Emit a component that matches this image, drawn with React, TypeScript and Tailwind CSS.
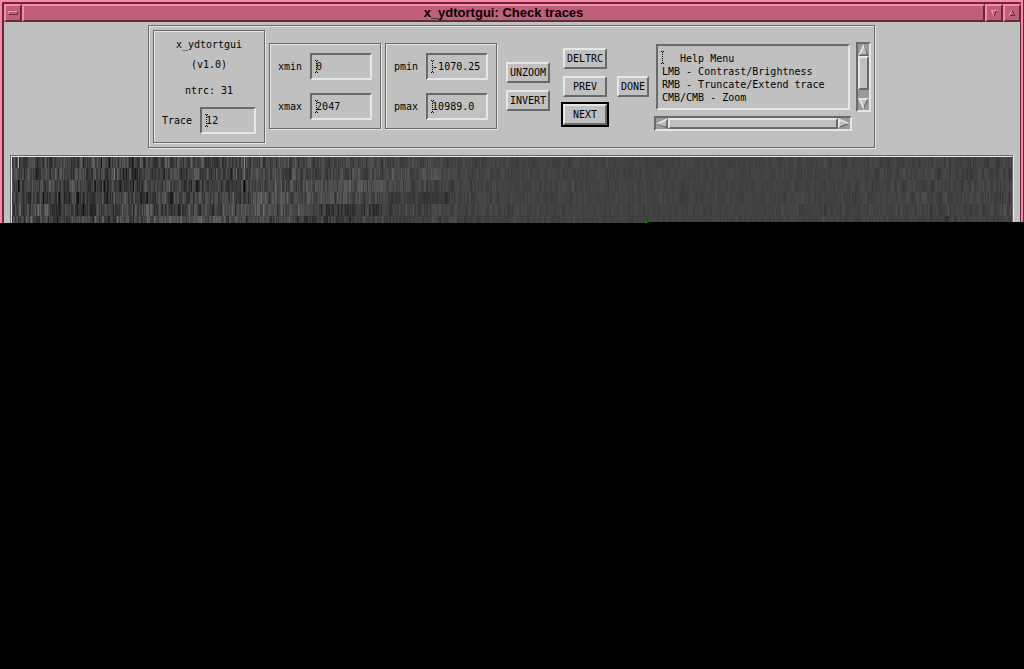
import { useEffect, useRef } from "react";

const ETCHED =
  "border border-[#696969] shadow-[1px_1px_0_#e6e6e6,inset_1px_1px_0_#e6e6e6]";
const SUNKEN =
  "border-2 border-t-[#696969] border-l-[#696969] border-b-[#e6e6e6] border-r-[#e6e6e6]";
const RAISED =
  "border-2 border-t-[#e6e6e6] border-l-[#e6e6e6] border-b-[#696969] border-r-[#696969]";
const PINK_RAISED =
  "border-2 border-t-[#ff87a6] border-l-[#ff87a6] border-b-[#5f2d3a] border-r-[#5f2d3a] bg-[#c06078]";

function InsertMark({ className }: { className: string }) {
  return (
    <svg
      aria-hidden="true"
      width="3"
      height="13"
      viewBox="0 0 3 13"
      shapeRendering="crispEdges"
      className={`pointer-events-none absolute ${className}`}
    >
      <path
        fill="#000"
        d="M0 0h1v1h-1zM2 0h1v1h-1zM1 1h1v1h-1zM1 3h1v1h-1zM1 5h1v1h-1zM1 7h1v1h-1zM1 9h1v1h-1zM1 11h1v1h-1zM0 12h1v1h-1zM2 12h1v1h-1z"
      />
    </svg>
  );
}

function Field({ id, value, width }: { id: string; value: string; width: string }) {
  return (
    <div className="flex items-center justify-end gap-2">
      <label htmlFor={id}>{id}</label>
      <div className={`relative ${width}`}>
        <input
          id={id}
          defaultValue={value}
          className={`block h-[27px] w-full bg-[#c0c0c0] pl-1 outline-none ${SUNKEN}`}
        />
        <InsertMark className="top-[7px] left-[5px]" />
      </div>
    </div>
  );
}

function PushButton({ label, width = "w-11" }: { label: string; width?: string }) {
  return (
    <button className={`flex h-[21px] items-center justify-center ${width} ${RAISED}`}>
      {label}
    </button>
  );
}

type Direction = "up" | "down" | "left" | "right";

const ARROWS: Record<Direction, { shape: string; dark: string; light: string }> = {
  up: {
    shape: "M5.5 0L11 12H0z",
    dark: "M5.5 0L11 12H0L1.5 10.2H8.6z",
    light: "M5.5 0L0 12L2 10.5L6 3z",
  },
  down: {
    shape: "M0 0H11L5.5 12z",
    dark: "M11 0L5.5 12V8.5L8.8 1.8z",
    light: "M0 0H11L9 1.8H2.6L5.7 8.5V12z",
  },
  left: {
    shape: "M0 5.5L12 0V11z",
    dark: "M0 5.5L12 11V0L10.2 2V8.6z",
    light: "M0 5.5L12 0L10.5 2.2L3.5 5.5z",
  },
  right: {
    shape: "M0 0L12 5.5L0 11z",
    dark: "M12 5.5L0 11L1.8 8.6L8.5 5.5z",
    light: "M0 11V0L12 5.5H8.5L1.8 2.6V8.6z",
  },
};

function ArrowButton({ direction }: { direction: Direction }) {
  const vertical = direction === "up" || direction === "down";
  const w = vertical ? 11 : 12;
  const h = vertical ? 12 : 11;
  const { shape, dark, light } = ARROWS[direction];
  return (
    <button aria-label={`Scroll ${direction}`} className="shrink-0">
      <svg width={w} height={h} viewBox={`0 0 ${w} ${h}`} className="block">
        <path d={shape} fill="#c0c0c0" />
        <path d={dark} fill="#696969" />
        <path d={light} fill="#e6e6e6" />
      </svg>
    </button>
  );
}

// Bright and dark events per row: [row, centre, half width, strength]
const EVENTS = [
  [1, 75, 18, 12],
  [1, 410, 50, 9],
  [1, 130, 30, -7],
  [2, 335, 45, 16],
  [2, 170, 35, -6],
  [3, 290, 60, 14],
  [3, 410, 30, -9],
  [3, 70, 20, -12],
  [4, 245, 50, 15],
  [4, 345, 35, -11],
  [4, 80, 20, -8],
  [5, 195, 45, 16],
  [5, 315, 40, -9],
];

// Single samples that stand out: [row, x, grey level]
const SPIKES = [
  [0, 6, 165],
  [0, 232, 140],
  [2, 6, 4],
  [2, 231, 30],
  [2, 232, 4],
  [0, 89, 18],
  [0, 120, 22],
  [1, 102, 120],
  [1, 224, 105],
  [2, 121, 15],
  [3, 31, 10],
  [3, 47, 12],
];

function Traces() {
  const ref = useRef<HTMLCanvasElement>(null);
  useEffect(() => {
    const ctx = ref.current?.getContext("2d");
    if (!ctx) return;
    let seed = 7321;
    const random = () => {
      seed = (seed * 1664525 + 1013904223) % 4294967296;
      return seed / 4294967296;
    };
    for (let row = 0; row < 6; row++) {
      const top = row === 0 ? 0 : row * 12 - 1;
      const height = row === 0 ? 11 : 12;
      let spread = 0;
      for (let x = 0; x < 1000; x++) {
        const early = 13 * Math.exp(-Math.pow(x / 400, 3));
        const late = x > 720 ? (x - 720) / 90 : 0;
        const amplitude = 2.5 + early + late;
        spread = spread * 0.3 + (random() + random() + random() - 1.5);
        let level = 65 + spread * 2 * amplitude;
        for (const [r, centre, half, strength] of EVENTS) {
          if (r === row) level += strength * Math.exp(-Math.pow((x - centre) / half, 2));
        }
        const spike = SPIKES.find(([r, at]) => r === row && at === x);
        const grey = spike ? spike[2] : Math.max(16, Math.min(120, Math.round(level)));
        ctx.fillStyle = `rgb(${grey},${grey},${grey})`;
        ctx.fillRect(x, top, 1, height);
      }
    }
    ctx.fillStyle = "#00ff00";
    ctx.fillRect(634, 65, 1, 1);
  }, []);
  return (
    <canvas
      ref={ref}
      width={1000}
      height={66}
      className="block h-[66px] w-full [image-rendering:pixelated]"
    />
  );
}

function TitleBar() {
  return (
    <header className="flex h-5 border-t-2 border-l-2 border-[#5f2d3a]">
      <button
        aria-label="Window menu"
        className={`flex w-[18px] items-center justify-center ${PINK_RAISED}`}
      >
        <span className="block h-1 w-2.5 border border-t-[#ff87a6] border-l-[#ff87a6] border-r-[#5f2d3a] border-b-[#5f2d3a]" />
      </button>
      <h1
        className={`flex flex-1 items-center justify-center pb-0.5 font-['Liberation_Sans',sans-serif] text-[13px] leading-none font-bold ${PINK_RAISED}`}
      >
        x_ydtortgui: Check traces
      </h1>
      <button
        aria-label="Minimize"
        className={`flex w-[18px] items-center justify-center ${PINK_RAISED}`}
      >
        <svg
          width="6"
          height="6"
          viewBox="0 0 6 6"
          shapeRendering="crispEdges"
          className="shrink-0"
        >
          <path d="M0 0h6v1H0zM0 1h2v1H0zM1 2h1v2H1zM2 4h1v2H2z" fill="#ff87a6" />
          <path d="M5 1h1v1H5zM4 2h1v2H4zM3 4h1v2H3z" fill="#5f2d3a" />
        </svg>
      </button>
      <button
        aria-label="Maximize"
        className={`flex w-[18px] items-center justify-center ${PINK_RAISED}`}
      >
        <svg
          width="6"
          height="6"
          viewBox="0 0 6 6"
          shapeRendering="crispEdges"
          className="shrink-0"
        >
          <path d="M2 0h1v2H2zM1 2h1v2H1zM0 4h1v2H0z" fill="#ff87a6" />
          <path d="M3 0h1v2H3zM4 2h1v2H4zM5 4h1v1H5zM1 5h5v1H1z" fill="#5f2d3a" />
        </svg>
      </button>
    </header>
  );
}

const HELP = `   Help Menu
LMB - Contrast/Brightness
RMB - Truncate/Extend trace
CMB/CMB - Zoom`;

function HelpBox() {
  return (
    <div className="flex items-start gap-1">
      <div className="flex w-[198px] flex-col gap-1">
        <div className="relative m-0.5">
          <textarea
            aria-label="Help"
            readOnly
            value={HELP}
            className={`block h-[66px] w-full resize-none overflow-hidden pt-1.5 pl-1 leading-[13px] whitespace-pre outline-none ${SUNKEN}`}
          />
          <InsertMark className="top-[7px] left-[5px]" />
        </div>
        <div className={`flex h-[15px] bg-[#9a9a9a] ${SUNKEN}`}>
          <ArrowButton direction="left" />
          <div className={`flex-1 bg-[#c0c0c0] ${RAISED}`} />
          <ArrowButton direction="right" />
        </div>
      </div>
      <div className={`flex h-[70px] w-[15px] flex-col bg-[#9a9a9a] ${SUNKEN}`}>
        <ArrowButton direction="up" />
        <div className={`h-[34px] bg-[#c0c0c0] ${RAISED}`} />
        <div className="flex-1" />
        <ArrowButton direction="down" />
      </div>
    </div>
  );
}

export default function App() {
  return (
    <div className="min-h-screen bg-black font-['DejaVu_Sans_Mono','Liberation_Mono',monospace] text-[10px] leading-[14px] text-black">
      <div className="border-r border-[#5f2d3a]">
        <div className="border-x-2 border-t-2 border-[#ff87a6]">
          <TitleBar />
          <main className="border-r border-l-2 border-[#5f2d3a] bg-[#c0c0c0] pt-[3px] pr-px">
            <div className={`mx-auto flex h-[123px] w-fit items-center pr-[3px] pl-1 ${ETCHED}`}>
              <section
                className={`mr-1 flex h-[113px] w-28 flex-col px-2 pt-[7px] text-center ${ETCHED}`}
              >
                <p>x_ydtortgui</p>
                <p className="mt-1.5">(v1.0)</p>
                <p className="mt-3 mb-[9px]">ntrc: 31</p>
                <Field id="Trace" value="12" width="w-14" />
              </section>
              <section
                className={`mr-1 mb-px flex h-[86px] w-28 flex-col gap-[13px] px-2 pt-[9px] ${ETCHED}`}
              >
                <Field id="xmin" value="0" width="w-[62px]" />
                <Field id="xmax" value="2047" width="w-[62px]" />
              </section>
              <section
                className={`mr-[9px] mb-px flex h-[86px] w-28 flex-col gap-[13px] px-2 pt-[9px] ${ETCHED}`}
              >
                <Field id="pmin" value="-1070.25" width="w-[62px]" />
                <Field id="pmax" value="10989.0" width="w-[62px]" />
              </section>
              <div className="mr-[11px] flex flex-col gap-[7px]">
                <PushButton label="UNZOOM" />
                <PushButton label="INVERT" />
              </div>
              <div className="mt-0.5 mr-2 flex flex-col items-center">
                <PushButton label="DELTRC" />
                <div className="mt-[7px] mb-[5px]">
                  <PushButton label="PREV" />
                </div>
                <div className="border-2 border-black">
                  <PushButton label="NEXT" />
                </div>
              </div>
              <div className="mr-[5px]">
                <PushButton label="DONE" width="w-8" />
              </div>
              <HelpBox />
            </div>
            <div className="mt-[7px] mr-1.5 ml-1.5 border border-b-0 border-[#696969] shadow-[1px_0_0_#e6e6e6]">
              <div className="border-t border-l border-[#e6e6e6]">
                <Traces />
              </div>
            </div>
          </main>
        </div>
      </div>
      <div className="relative -mt-px ml-auto h-px w-[377px] bg-black" />
    </div>
  );
}
